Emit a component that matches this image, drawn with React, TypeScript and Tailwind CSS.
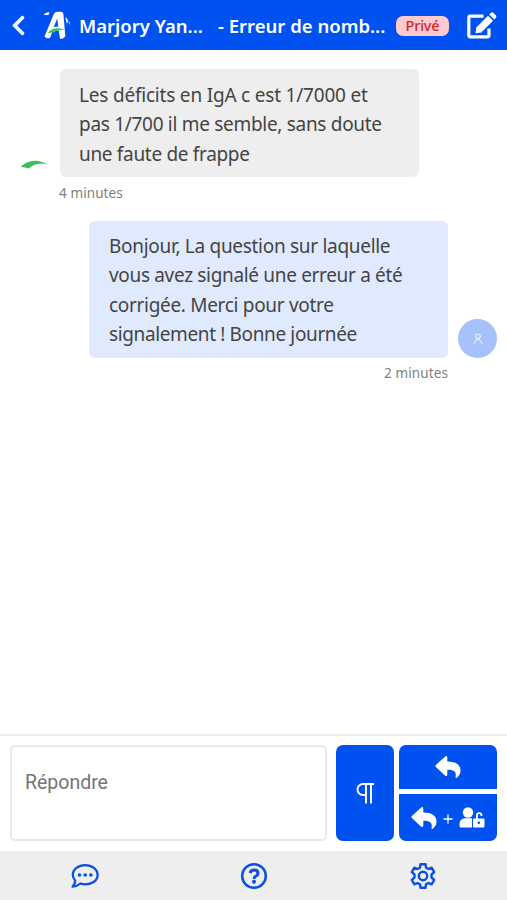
import React from "react";
import { FaChevronLeft } from "react-icons/fa";

const textFont = "font-['Noto_Sans','Open_Sans',sans-serif]";

function Logo() {
  return (
    <svg width="28" height="30" viewBox="0 0 28 30" className="shrink-0">
      <path d="M0.500 5.200Q2.500 2 6.500 2.300L5.300 5.300Q3 4.500 0.500 5.200Z" fill="#fff" />
      <path d="M10.800 4Q12 1.800 15 1.800H18Q20 1.800 20.400 4L22.300 26Q21 29 17 28.800L15.700 20.500L9.500 21.500L7 28Q3.500 29.200 1.500 26.500ZM14.200 8.500L10.800 17L15.300 16.500Z" fill="#fff" fillRule="evenodd" />
      <path d="M4.500 23Q11 15.500 22 20Q14 19.500 10.500 22.500Z" fill="#40bf55" />
      <path d="M22.300 7.200Q24.500 8 25 11L24 14Q22.800 10 22.300 7.200ZM25.500 10.500Q27 12 27 15.200Q25.800 13.500 25.500 10.500Z" fill="#fff" />
    </svg>
  );
}

function EditIcon() {
  return (
    <svg width="30" height="28" viewBox="0 0 30 28" className="shrink-0" fill="none">
      <path d="M16.500 5.200H3.300Q1.800 5.200 1.800 6.700V24.300Q1.800 25.800 3.300 25.800H20.500Q22 25.800 22 24.300V17.500" stroke="#fff" strokeWidth="3.200" />
      <path d="M8.500 22.300L9.300 16.500L21 4.800L26 9.800L14.300 21.500Z" fill="#fff" />
      <path d="M22.200 3.600L24 1.800Q25.300 .7 26.500 1.900L29 4.400Q30 5.600 28.800 6.900L27.100 8.600Z" fill="#fff" />
    </svg>
  );
}

function ReplyIcon() {
  return (
    <svg width="26" height="24" viewBox="0 0 26 24" className="shrink-0" fill="#fff">
      <path d="M.9 9.900L10.200 1.400Q12 .3 12.300 2.300V6.600C20.500 6.700 25.500 9.500 25.500 15.500Q25.500 20 21.700 22.800Q20.300 23.300 20.600 21.800C21.600 16.500 19 14.800 12.300 14.700V19.800Q12 21.800 10.200 20.700L.9 12.100Q-.2 11 .9 9.900Z" />
    </svg>
  );
}

function Lines({ lines }: { lines: { t: string; c: string }[] }) {
  return (
    <>
      {lines.map((l) => (
        <div key={l.t} className="whitespace-nowrap">
          <span className={l.c}>{l.t}</span>
        </div>
      ))}
    </>
  );
}

export default function App() {
  return (
    <div className={`flex h-[900px] w-[507px] flex-col overflow-hidden bg-white text-[#444] ${textFont}`}>
      <header className="flex h-[50px] shrink-0 items-center bg-[#0052f0] text-[18.500px] font-semibold text-white">
        <FaChevronLeft className="ml-[7px] h-[23px] w-[23px] shrink-0" />
        <div className="ml-[13px]"><Logo /></div>
        <div className="ml-[8px] w-[139px] shrink-0 whitespace-nowrap pt-px"><span>Marjory Yan...</span></div>
        <div className="w-[178px] shrink-0 whitespace-nowrap pt-px"><span>- Erreur de nomb...</span></div>
        <div className="mt-px flex h-[20px] w-[53px] shrink-0 items-center justify-center rounded-[7px] bg-[#ffc9cd] text-[14.500px] font-medium tracking-[-0.2px] text-[#c92a35]">Privé</div>
        <div className="ml-[18px]"><EditIcon /></div>
      </header>

      <main className="flex flex-1 flex-col text-[19px] leading-[29.300px]">
        <div className="mt-[19px] flex items-end">
          <svg width="28" height="10" viewBox="0 0 28 10" className="mb-[7px] ml-[20px] mr-[12px] shrink-0">
            <path d="M.5 7Q12-4 28 4.500Q17 1.500 8.500 8.500Q4 6.500 .5 7Z" fill="#3fbb58" />
          </svg>
          <div className="h-[108px] w-[359px] rounded-[6px] bg-[#eee] px-[19px] pt-[12px]">
            <Lines lines={[
              { t: "Les déficits en IgA c est 1/7000 et", c: "tracking-[-0.2px]" },
              { t: "pas 1/700 il me semble, sans doute", c: "tracking-[-0.3px]" },
              { t: "une faute de frappe", c: "tracking-[-0.32px]" },
            ]} />
          </div>
        </div>
        <div className="ml-[59px] mt-[6px] h-[20px] text-[13.500px] leading-[20px] tracking-[0.1px] text-[#808080]">4 minutes</div>
        <div className="mt-[18px] flex items-end">
          <div className="ml-[89px] h-[137px] w-[359px] rounded-[6px] bg-[#e0eaff] px-[20px] pt-[11px]">
            <Lines lines={[
              { t: "Bonjour, La question sur laquelle", c: "tracking-[-0.3px]" },
              { t: "vous avez signalé une erreur a été", c: "tracking-[-0.33px]" },
              { t: "corrigée. Merci pour votre", c: "tracking-[-0.31px]" },
              { t: "signalement ! Bonne journée", c: "tracking-[-0.37px]" },
            ]} />
          </div>
          <div className="ml-[10px] flex h-[39px] w-[39px] items-center justify-center rounded-full bg-[#a6c1fa]">
            <svg width="10" height="12" viewBox="0 0 10 12" fill="none" stroke="#e5edff" strokeWidth="1.200">
              <circle cx="5" cy="3.300" r="2.300" />
              <path d="M1.200 11.500Q1.500 7 5 6.500Q8.500 7 8.800 11.500" />
            </svg>
          </div>
        </div>
        <div className="mr-[59px] mt-[5px] text-right text-[13.500px] leading-[20px] tracking-[0.1px] text-[#808080]">2 minutes</div>
      </main>

      <section className="flex h-[117px] shrink-0 border-t-2 border-[#eee] pl-[10px] pt-[8px]">
        <div className="mt-px h-[96px] w-[317px] shrink-0 rounded-[5px] border-2 border-[#e9e9e9] px-[13px] pt-[22px] font-['Roboto',sans-serif] text-[19.500px] leading-[28px] text-[#757575]">Répondre</div>
        <div className="ml-[9px] mt-px flex h-[96px] w-[58px] items-center justify-center rounded-[7px] bg-[#0052f0]">
          <svg width="18" height="22" viewBox="0 0 18 22" fill="none" stroke="#fff" strokeWidth="1.900">
            <path d="M18 2H7A5.500 5.500 0 0 0 7 13H10M10 2V21.500M15 2V21.500" />
          </svg>
        </div>
        <div className="ml-[5px] mt-px flex w-[98px] flex-col gap-[5px] text-white">
          <div className="flex h-[44px] items-center justify-center rounded-t-[7px] bg-[#0052f0]"><ReplyIcon /></div>
          <div className="flex h-[47px] items-center rounded-b-[7px] bg-[#0052f0] pl-[12px]">
            <ReplyIcon />
            <svg width="10" height="10" viewBox="0 0 10 10" className="ml-[6px] mt-[2px]" stroke="#fff" strokeWidth="1.300"><path d="M5 .5V9.500M.5 5H9.500" /></svg>
            <svg width="26" height="21" viewBox="0 0 26 21" className="ml-[6px]" fill="#fff">
              <circle cx="9" cy="5.500" r="5.200" />
              <path d="M6 11.300H13V20.500H2Q.5 20.500 .5 19V17Q.5 11.800 6 11.300Z" />
              <path d="M15 11.500H17V8.500A3.200 3.200 0 0 1 23.400 8.500V9H21.600V8.500A1.400 1.400 0 0 0 18.800 8.500V11.500H24.500Q25.500 11.500 25.500 12.500V19.500Q25.500 20.500 24.500 20.500H15Q14 20.500 14 19.500V12.500Q14 11.500 15 11.500ZM19.800 14.500A1.300 1.300 0 1 0 19.800 17.100A1.300 1.300 0 1 0 19.800 14.500Z" fillRule="evenodd" />
            </svg>
          </div>
        </div>
      </section>

      <footer className="grid h-[49px] shrink-0 grid-cols-3 place-items-center bg-[#eee] text-[#0b50e0]">
        <svg width="28" height="26" viewBox="0 0 28 26" fill="none" stroke="currentColor" strokeWidth="2.300">
          <path d="M4.200 17.500A8.800 8.800 0 0 1 1.800 12C1.800 6.300 7.500 2.200 14.200 2.200S26.600 6.300 26.600 12S21 21.300 14.200 21.300Q11.800 21.300 9.500 20.500Q6 23.500 1.500 23.700Q4.500 20.500 4.200 17.500Z" strokeLinejoin="round" />
          <g fill="currentColor" stroke="none"><circle cx="8.500" cy="12" r="1.800" /><circle cx="14.200" cy="12" r="1.800" /><circle cx="19.900" cy="12" r="1.800" /></g>
        </svg>
        <svg width="28" height="28" viewBox="0 0 28 28" fill="none" stroke="currentColor" strokeWidth="2.500">
          <circle cx="14" cy="14" r="11.800" />
          <path d="M10 11Q11 8 14 8Q18 8 18 11.300Q18 13 16 14Q14 15 14 17" strokeWidth="3" />
          <circle cx="14" cy="19.800" r="2" fill="currentColor" stroke="none" />
        </svg>
        <svg width="28" height="28" viewBox="0 0 28 28" fill="none" stroke="currentColor" strokeWidth="2.400" strokeLinejoin="round">
          <path d="M11.500 2.200H16.500L17 5.600L19.500 7L22.600 5.700L25.200 10.200L22.500 12.500V15.500L25.200 17.800L22.600 22.300L19.500 21L17 22.400L16.500 25.800H11.500L11 22.400L8.500 21L5.400 22.300L2.800 17.800L5.500 15.500V12.500L2.800 10.200L5.400 5.700L8.500 7L11 5.600Z" />
          <circle cx="14" cy="14" r="4.200" />
        </svg>
      </footer>
    </div>
  );
}
